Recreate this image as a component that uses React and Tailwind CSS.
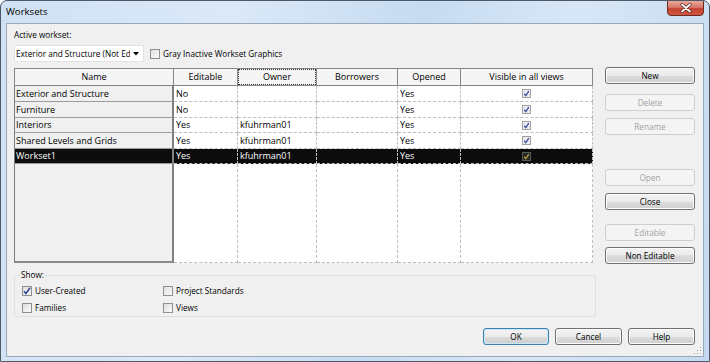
import React from "react";

const rows = [
  { name: "Exterior and Structure", editable: "No", owner: "", opened: "Yes", h: "h-[16px]" },
  { name: "Furniture", editable: "No", owner: "", opened: "Yes", h: "h-[16px]" },
  { name: "Interiors", editable: "Yes", owner: "kfuhrman01", opened: "Yes", h: "h-[15px]" },
  { name: "Shared Levels and Grids", editable: "Yes", owner: "kfuhrman01", opened: "Yes", h: "h-[16px]" },
  { name: "Workset1", editable: "Yes", owner: "kfuhrman01", opened: "Yes", h: "h-[15px]", sel: true },
];

function GridCheck({ sel }) {
  return (
    <div
      className={
        sel
          ? "w-[9px] h-[9px] border border-[#5a5a5a] bg-[#262626] flex items-center justify-center"
          : "w-[9px] h-[9px] border border-[#a2a2a2] bg-[#ececec] flex items-center justify-center"
      }
    >
      <svg width="7" height="7" viewBox="0 0 7 7">
        <path d="M1.2 3.8 L2.8 5.6 L5.8 1.2" fill="none" stroke={sel ? "#b49a3c" : "#3d58a8"} strokeWidth="1.4" />
      </svg>
    </div>
  );
}

function FormCheck({ checked }) {
  return (
    <div className="w-[10px] h-[10px] border border-[#8e8f8f] bg-[linear-gradient(135deg,#dedede,#fbfbfb)] flex items-center justify-center shrink-0">
      {checked && (
        <svg width="8" height="8" viewBox="0 0 8 8">
          <path d="M1 4.2 L3 6.6 L7 0.8" fill="none" stroke="#2a3f8f" strokeWidth="1.5" />
        </svg>
      )}
    </div>
  );
}

function Btn({ children, disabled, w = "w-[90px]", def }) {
  if (disabled) {
    return (
      <div className={`${w} h-[17px] rounded-[3px] border border-[#cdcdcd] bg-[#f4f4f4] text-[#a3a3a3] flex items-center justify-center`}>
        {children}
      </div>
    );
  }
  if (def) {
    return (
      <div className={`${w} h-[17px] rounded-[3px] border border-[#3c7fb1] bg-[#c8e8f8] p-[1px] flex items-center justify-center`}>
        <div className="w-full h-full rounded-[2px] bg-[linear-gradient(#f2f2f2_0%,#ebebeb_50%,#dddddd_50%,#cfcfcf_100%)] flex items-center justify-center">
          {children}
        </div>
      </div>
    );
  }
  return (
    <div className={`${w} h-[17px] rounded-[3px] border border-[#707070] bg-[linear-gradient(#f2f2f2_0%,#ebebeb_50%,#dddddd_50%,#cfcfcf_100%)] shadow-[inset_0_0_0_1px_#fcfcfc] flex items-center justify-center`}>
      {children}
    </div>
  );
}

const cell = "bg-white border-r border-b border-dashed border-[#bdbdbd] pl-[2px] flex items-center";
const cellSel = "bg-[#0c0c0c] text-white border-r border-b border-dashed border-[#bdbdbd] pl-[2px] flex items-center";

export default function App() {
  return (
    <div className="w-[710px] h-[362px] flex flex-col border border-[#4d5966] rounded-t-[7px] bg-[linear-gradient(100deg,#cfe1f5_0%,#dbe9f8_30%,#c6dbf1_55%,#d8e7f7_75%,#c4d9ef_100%)] font-['Open_Sans',sans-serif] text-[8.2px] leading-[12px] text-black overflow-hidden">
      {/* Title bar */}
      <div className="h-[22px] flex justify-between shrink-0">
        <div className="pl-[5px] pt-[5px] text-[9.6px] text-black">Worksets</div>
        <div className="mr-[5px] w-[37px] h-[16px] -mt-[1px] rounded-b-[4px] border border-[#6e2a22] bg-[linear-gradient(#e9a99c_0%,#d9786a_45%,#c4422f_55%,#d0563f_100%)] flex items-center justify-center">
          <svg width="12" height="10" viewBox="0 0 12 10">
            <path d="M2 1.5 L10 8.5 M10 1.5 L2 8.5" stroke="#5a2a26" strokeWidth="3.2" strokeLinecap="round" />
            <path d="M2 1.5 L10 8.5 M10 1.5 L2 8.5" stroke="#ffffff" strokeWidth="1.7" strokeLinecap="round" />
          </svg>
        </div>
      </div>

      {/* Client */}
      <div className="relative mx-[5px] mb-[4px] flex-1 border border-[#98a8bb] bg-[#f0f0f0] pl-[7px] pr-[8px] flex flex-col">
        <div className="mt-[5px] h-[12px]">Active workset:</div>
        <div className="mt-[4px] h-[17px] flex items-center">
          <div className="w-[130px] h-[17px] bg-white border border-[#e2e2e2] flex items-center justify-between pl-[1px] pr-[4px]">
            <span className="whitespace-nowrap overflow-hidden">Exterior and Structure (Not Ed</span>
            <svg width="6" height="4" viewBox="0 0 6 4" className="shrink-0 ml-[3px]">
              <path d="M0 0 L6 0 L3 3.5 Z" fill="#000" />
            </svg>
          </div>
          <div className="ml-[6px]">
            <FormCheck />
          </div>
          <span className="ml-[3px]">Gray Inactive Workset Graphics</span>
        </div>

        {/* Main */}
        <div className="mt-[5px] flex">
          <div className="mt-[1px] w-[579px] h-[195px] flex flex-col bg-white text-[9px]">
            <div className="grid grid-cols-[160px_64px_79px_81px_63px_132px] h-[18px]">
              <div className="bg-[#f5f5f5] border-l border-t border-r border-b border-[#868686] flex items-center justify-center">Name</div>
              <div className="bg-[#f5f5f5] border-t border-r border-b border-[#868686] flex items-center justify-center">Editable</div>
              <div className="bg-[#f5f5f5] border-t border-r border-b border-[#868686] flex items-center justify-center">
                <div className="w-full h-full border border-dotted border-[#333] flex items-center justify-center">Owner</div>
              </div>
              <div className="bg-[#f5f5f5] border-t border-r border-b border-[#868686] flex items-center justify-center">Borrowers</div>
              <div className="bg-[#f5f5f5] border-t border-r border-b border-[#868686] flex items-center justify-center">Opened</div>
              <div className="bg-[#f5f5f5] border-t border-r border-b border-[#868686] flex items-center justify-center">Visible in all views</div>
            </div>
            {rows.map((r) => (
              <div key={r.name} className={`grid grid-cols-[160px_64px_79px_81px_63px_132px] ${r.h}`}>
                <div
                  className={
                    r.sel
                      ? "bg-[#0c0c0c] text-white border-l border-[#7a7a7a] border-b border-b-[#9c9c9c] border-r-2 border-r-[#808080] pl-[1px] flex items-center whitespace-nowrap"
                      : "bg-[#f0f0f0] border-l border-[#7a7a7a] border-b border-b-[#9c9c9c] border-r-2 border-r-[#808080] pl-[1px] flex items-center whitespace-nowrap"
                  }
                >
                  {r.name}
                </div>
                <div className={r.sel ? cellSel : cell}>{r.editable}</div>
                <div className={r.sel ? cellSel : cell}>{r.owner}</div>
                <div className={r.sel ? cellSel : cell}></div>
                <div className={r.sel ? cellSel : cell}>{r.opened}</div>
                <div className={r.sel ? "bg-[#0c0c0c] border-r border-b border-dashed border-[#bdbdbd] flex items-center justify-center" : "bg-white border-r border-b border-dashed border-[#bdbdbd] flex items-center justify-center"}>
                  <GridCheck sel={r.sel} />
                </div>
              </div>
            ))}
            <div className="flex-1 grid grid-cols-[160px_64px_79px_81px_63px_132px]">
              <div className="bg-[#f0f0f0] border-l border-[#7a7a7a] border-r-2 border-r-[#808080] border-b-2 border-b-[#8a8a8a]"></div>
              <div className="bg-white border-r border-b border-dashed border-[#bdbdbd]"></div>
              <div className="bg-white border-r border-b border-dashed border-[#bdbdbd]"></div>
              <div className="bg-white border-r border-b border-dashed border-[#bdbdbd]"></div>
              <div className="bg-white border-r border-b border-dashed border-[#bdbdbd]"></div>
              <div className="bg-white border-r border-b border-dashed border-[#bdbdbd]"></div>
            </div>
          </div>

          <div className="ml-[12px] w-[90px] flex flex-col">
            <Btn>New</Btn>
            <div className="mt-[10px]"><Btn disabled>Delete</Btn></div>
            <div className="mt-[7px]"><Btn disabled>Rename</Btn></div>
            <div className="mt-[34px]"><Btn disabled>Open</Btn></div>
            <div className="mt-[7px]"><Btn>Close</Btn></div>
            <div className="mt-[14px]"><Btn disabled>Editable</Btn></div>
            <div className="mt-[6px]"><Btn>Non Editable</Btn></div>
          </div>
        </div>

        {/* Show group */}
        <div className="relative mt-[11px] w-[582px] h-[42px] rounded-[3px] border border-[#d9e1e6] pl-[7px] pt-[10px]">
          <div className="absolute -top-[7px] left-[5px] px-[1px] bg-[#f0f0f0]">Show:</div>
          <div className="grid grid-cols-[141px_1fr] gap-y-[7px]">
            <div className="flex items-center h-[10px]"><FormCheck checked /><span className="ml-[3px]">User-Created</span></div>
            <div className="flex items-center h-[10px]"><FormCheck /><span className="ml-[3px]">Project Standards</span></div>
            <div className="flex items-center h-[10px]"><FormCheck /><span className="ml-[3px]">Families</span></div>
            <div className="flex items-center h-[10px]"><FormCheck /><span className="ml-[3px]">Views</span></div>
          </div>
        </div>

        {/* Bottom buttons */}
        <div className="mt-[11px] flex justify-end gap-[6px]">
          <Btn def w="w-[66px]">OK</Btn>
          <Btn w="w-[67px]">Cancel</Btn>
          <Btn w="w-[67px]">Help</Btn>
        </div>

        {/* resize grip */}
        <svg className="absolute right-[1px] bottom-[1px]" width="8" height="8" viewBox="0 0 8 8">
          <rect x="6" y="0" width="1" height="1" fill="#a0a0a0" />
          <rect x="3" y="3" width="1" height="1" fill="#a0a0a0" />
          <rect x="6" y="3" width="1" height="1" fill="#a0a0a0" />
          <rect x="0" y="6" width="1" height="1" fill="#a0a0a0" />
          <rect x="3" y="6" width="1" height="1" fill="#a0a0a0" />
          <rect x="6" y="6" width="1" height="1" fill="#a0a0a0" />
        </svg>
      </div>
    </div>
  );
}
